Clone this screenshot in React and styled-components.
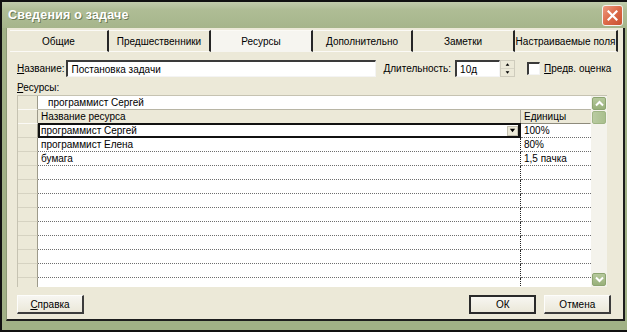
import React from 'react'
import styled, { createGlobalStyle } from 'styled-components'

const GlobalStyle = createGlobalStyle`
  html, body { margin: 0; padding: 0; background: #0c0c0c; }
  body { font-family: "Liberation Sans", Arial, sans-serif; font-size: 10px; color: #000; }
  * { box-sizing: border-box; }
`

const Window = styled.div`
  width: 627px;
  height: 332px;
  padding: 2px;
  background: #111;
  display: flex;
`

const Frame = styled.div`
  flex: 1;
  display: flex;
  flex-direction: column;
  background: #a1b186;
  padding: 0 2px 9px 4px;
`

const TitleBar = styled.div`
  height: 26px;
  margin: 0 -2px 0 -4px;
  padding: 0 4px 0 6px;
  display: flex;
  align-items: center;
  justify-content: space-between;
  background: linear-gradient(180deg, #c2ccac 0%, #afbd95 30%, #a6b58b 100%);
`

const Title = styled.div`
  color: #fff;
  font-size: 12.5px;
  font-weight: bold;
  letter-spacing: 0.2px;
  text-shadow: 1px 1px 0 #6c7a55;
`

const CloseButton = styled.div`
  width: 21px;
  height: 21px;
  border: 1px solid #f4f4f0;
  border-radius: 3px;
  background: linear-gradient(135deg, #ee9b82 0%, #dc6a48 50%, #c9502f 100%);
  display: flex;
  align-items: center;
  justify-content: center;
`

const Body = styled.div`
  flex: 1;
  display: flex;
  flex-direction: column;
  background: #ece9d8;
  border-left: 1px solid #8d9a76;
  border-right: 2px solid #1d1d1d;
  border-bottom: 2px solid #1d1d1d;
  padding-top: 2px;
`

const Tabs = styled.div`
  display: flex;
  height: 22px;
  padding-left: 3px;
`

const Tab = styled.div`
  width: ${p => p.$w}px;
  height: 22px;
  display: flex;
  align-items: center;
  justify-content: center;
  white-space: nowrap;
  background: ${p => (p.$active ? '#f6f5f0' : '#ece9d8')};
  border-top: 1px solid #fbfaf6;
  border-right: 2px solid #262626;
  border-bottom: 1px solid ${p => (p.$active ? 'transparent' : '#fbfaf6')};
  padding-top: 1px;
`

const Panel = styled.div`
  display: flex;
  flex-direction: column;
  padding: 8px 12px 0 10px;
`

const FieldRow = styled.div`
  display: flex;
  align-items: center;
  height: 17px;
`

const Label = styled.span`
  margin-left: ${p => p.$ml || 0}px;
  margin-right: ${p => p.$mr || 0}px;
  white-space: nowrap;
`

const TextInput = styled.div`
  width: ${p => p.$w}px;
  height: 17px;
  background: #fff;
  border-style: solid;
  border-width: 2px 1px 1px 2px;
  border-color: #3a3a3a #f4f4f4 #f4f4f4 #3a3a3a;
  padding: 1px 3px 0;
  display: flex;
  align-items: center;
`

const Spin = styled.div`
  width: 15px;
  height: 17px;
  display: flex;
  flex-direction: column;
  background: #ece9d8;
  border: 1px solid #cfccbd;
`

const SpinHalf = styled.div`
  flex: 1;
  display: flex;
  align-items: center;
  justify-content: center;
  &:first-child { border-bottom: 1px solid #d8d5c6; }
`

const CheckBox = styled.div`
  width: 13px;
  height: 13px;
  margin-left: 12px;
  background: #fff;
  border-style: solid;
  border-width: 2px 1px 1px 2px;
  border-color: #3a3a3a #f4f4f4 #f4f4f4 #3a3a3a;
`

const SectionLabel = styled.div`
  margin-top: 4px;
  height: 13px;
  line-height: 13px;
`

const Grid = styled.div`
  margin-top: 1px;
  width: 590px;
  height: 192px;
  display: flex;
  border-top: 1px solid #c6c3b2;
  border-left: 1px solid #c6c3b2;
`

const Table = styled.div`
  flex: 1;
  display: flex;
  flex-direction: column;
  overflow: hidden;
`

const Row = styled.div`
  display: flex;
  height: 14px;
  flex-shrink: 0;
`

const RowHead = styled.div`
  width: 20px;
  flex-shrink: 0;
  background: #ece9d8;
  border-right: 1px solid #9d9a8a;
  border-bottom: 1px solid ${p => (p.$light ? '#fbfaf6' : '#d6d3c2')};
`

const EditField = styled.div`
  flex: 1;
  background: #fff;
  padding-left: 10px;
  line-height: 13px;
  border-bottom: 1px solid #b8b5a5;
`

const HeadCell = styled.div`
  width: ${p => (p.$w ? `${p.$w}px` : 'auto')};
  flex: ${p => (p.$w ? '0 0 auto' : '1')};
  background: #ece9d8;
  padding-left: 3px;
  line-height: 14px;
  border-right: 1px solid ${p => (p.$w ? '#a9a697' : 'transparent')};
  border-bottom: 1px solid #8e8b7c;
`

const Cell = styled.div`
  width: ${p => (p.$w ? `${p.$w}px` : 'auto')};
  flex: ${p => (p.$w ? '0 0 auto' : '1')};
  background: #fff;
  padding-left: 3px;
  line-height: 13px;
  border-bottom: 1px dotted #6e6e6e;
  border-right: ${p => (p.$w ? '1px dotted #222' : 'none')};
  white-space: nowrap;
`

const SelectedCell = styled.div`
  width: ${p => p.$w}px;
  flex-shrink: 0;
  background: #fff;
  border: 2px solid #111;
  border-right-width: 3px;
  padding-left: 1px;
  display: flex;
  align-items: center;
  justify-content: space-between;
  margin-top: -1px;
  height: 15px;
`

const DropButton = styled.div`
  width: 11px;
  height: 10px;
  background: #ece9d8;
  border: 1px solid #c5c2b2;
  display: flex;
  align-items: center;
  justify-content: center;
`

const ScrollBar = styled.div`
  width: 16px;
  flex-shrink: 0;
  display: flex;
  flex-direction: column;
  align-items: center;
  background: #f4f3ec;
  padding: 1px 0;
`

const ScrollArrow = styled.div`
  width: 14px;
  height: 13px;
  border-radius: 2px;
  background: linear-gradient(180deg, #b6c99c 0%, #98b07a 100%);
  border: 1px solid #8da571;
  display: flex;
  align-items: center;
  justify-content: center;
  margin-top: ${p => (p.$bottom ? 'auto' : '0')};
`

const Thumb = styled.div`
  width: 14px;
  height: 13px;
  margin-top: 1px;
  border-radius: 2px;
  background: linear-gradient(90deg, #b9cba1 0%, #a9bf8d 100%);
  border: 1px solid #9fb584;
`

const Footer = styled.div`
  display: flex;
  align-items: center;
  margin-top: auto;
  padding: 0 12px 5px 10px;
`

const Button = styled.div`
  width: 67px;
  height: 19px;
  display: flex;
  align-items: center;
  justify-content: center;
  background: linear-gradient(180deg, #f7f6f1 0%, #ebe8d9 100%);
  border-style: solid;
  border-width: ${p => (p.$default ? '2px' : '1px 2px 2px 1px')};
  border-color: ${p => (p.$default ? '#2a2a2a' : '#fdfdfb #3c3c3c #3c3c3c #fdfdfb')};
  margin-left: ${p => p.$ml || '0'};
`

const Arrow = ({ dir = 'down', color = '#000', size = 7 }) => (
  <svg width={size} height={size} viewBox="0 0 8 8">
    {dir === 'down' ? <path d="M1 2h6L4 6z" fill={color} /> : <path d="M1 6h6L4 2z" fill={color} />}
  </svg>
)

const Chevron = ({ up }) => (
  <svg width="9" height="7" viewBox="0 0 9 7">
    <path d={up ? 'M1 5.5L4.5 2 8 5.5' : 'M1 1.5L4.5 5 8 1.5'} stroke="#fff" strokeWidth="2" fill="none" />
  </svg>
)

const tabs = [
  { label: 'Общие', w: 99 },
  { label: 'Предшественники', w: 102 },
  { label: 'Ресурсы', w: 102, active: true },
  { label: 'Дополнительно', w: 100 },
  { label: 'Заметки', w: 102 },
  { label: 'Настраиваемые поля', w: 103 },
]

const rows = [
  { name: 'программист Сергей', units: '100%', selected: true },
  { name: 'программист Елена', units: '80%' },
  { name: 'бумага', units: '1,5 пачка' },
  {}, {}, {}, {}, {}, {}, {}, {}, {},
]

const App = () => {
  return (
    <>
      <GlobalStyle />
      <Window>
        <Frame>
          <TitleBar>
            <Title>Сведения о задаче</Title>
            <CloseButton>
              <svg width="11" height="11" viewBox="0 0 11 11">
                <path d="M1.5 1.5l8 8M9.5 1.5l-8 8" stroke="#fff" strokeWidth="2.2" strokeLinecap="square" />
              </svg>
            </CloseButton>
          </TitleBar>
          <Body>
            <Tabs>
              {tabs.map(t => (
                <Tab key={t.label} $w={t.w} $active={t.active}>{t.label}</Tab>
              ))}
            </Tabs>
            <Panel>
              <FieldRow>
                <Label $mr={2}><u>Н</u>азвание:</Label>
                <TextInput $w={310}>Постановка задачи</TextInput>
                <Label $ml={7} $mr={4}><u>Д</u>лительность:</Label>
                <TextInput $w={45}>10д</TextInput>
                <Spin>
                  <SpinHalf><Arrow dir="up" size={5} /></SpinHalf>
                  <SpinHalf><Arrow dir="down" size={5} /></SpinHalf>
                </Spin>
                <CheckBox />
                <Label $ml={4}><u>П</u>редв. оценка</Label>
              </FieldRow>
              <SectionLabel><u>Р</u>есурсы:</SectionLabel>
              <Grid>
                <Table>
                  <Row>
                    <RowHead $light />
                    <EditField>программист Сергей</EditField>
                  </Row>
                  <Row>
                    <RowHead $light />
                    <HeadCell $w={483}>Название ресурса</HeadCell>
                    <HeadCell>Единицы</HeadCell>
                  </Row>
                  {rows.map((r, i) => (
                    <Row key={i}>
                      <RowHead />
                      {r.selected ? (
                        <SelectedCell $w={483}>
                          <span>{r.name}</span>
                          <DropButton><Arrow size={7} /></DropButton>
                        </SelectedCell>
                      ) : (
                        <Cell $w={483}>{r.name}</Cell>
                      )}
                      <Cell>{r.units}</Cell>
                    </Row>
                  ))}
                </Table>
                <ScrollBar>
                  <ScrollArrow><Chevron up /></ScrollArrow>
                  <Thumb />
                  <ScrollArrow $bottom><Chevron /></ScrollArrow>
                </ScrollBar>
              </Grid>
            </Panel>
            <Footer>
              <Button><u>С</u>правка</Button>
              <Button $default $ml="auto">ОК</Button>
              <Button $ml="8px">Отмена</Button>
            </Footer>
          </Body>
        </Frame>
      </Window>
    </>
  )
}

export default App
